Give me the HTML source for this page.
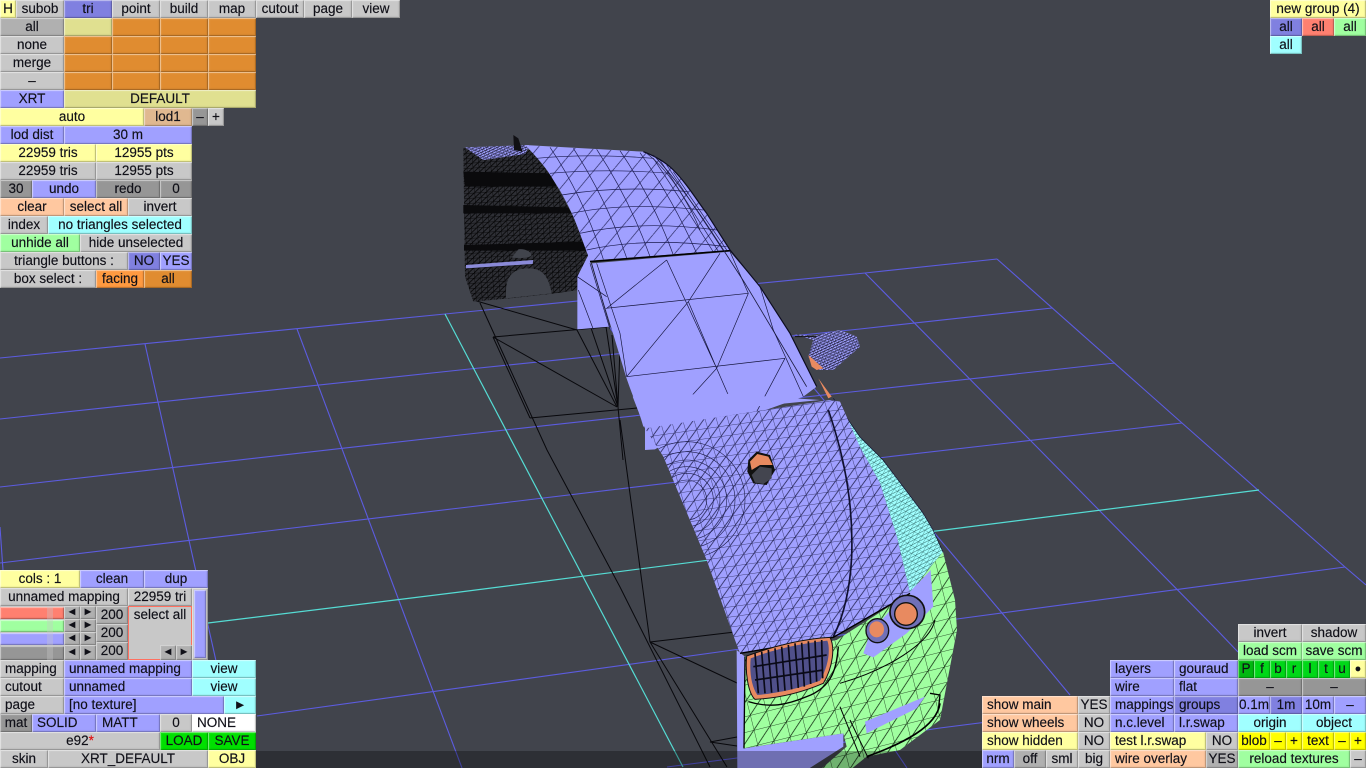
<!DOCTYPE html>
<html><head><meta charset="utf-8"><style>
html,body{margin:0;padding:0;width:1366px;height:768px;overflow:hidden;background:#41444c}
svg{position:absolute;left:0;top:0}
#band{position:absolute;left:0;top:751px;width:1366px;height:17px;background:rgba(0,0,0,.3)}
i{position:absolute;font-style:normal;height:18px;line-height:18px;text-align:center;box-sizing:border-box;font-family:"Liberation Sans",sans-serif;font-size:13.5px;letter-spacing:0;color:#101018;-webkit-text-stroke:.15px #101018;white-space:pre;box-shadow:inset 1px 1px 0 rgba(255,255,255,.4),inset -1px -1px 0 rgba(0,0,0,.2),inset 2px 2px 1px rgba(255,255,255,.08),inset -2px -2px 1px rgba(0,0,0,.05);overflow:hidden}
.g{background:#c8c8c8}.d{background:#969696}.m{background:#b0b0b0}.b{background:#a0a0ff}.k{background:#8080e0}
.y{background:#ffffa0}.p{background:#ffc8a0}.c{background:#a0ffff}.n{background:#a0ffa0}.o{background:#e08c30}
.e{background:#e0e090}.f{background:#ff9a40}.t{background:#e0b890}.r{background:#ff8070}.w{background:#fff}
.v{background:#00e000}.u{background:#ffff00}.q{background:#00d818}
.l{text-align:left;padding-left:5px}
.s{font-size:11px;letter-spacing:0}
</style></head><body>
<svg width="1366" height="768" viewBox="0 0 1366 768" xmlns="http://www.w3.org/2000/svg">
<defs>
<pattern id="dg" width="70" height="55" patternUnits="userSpaceOnUse" patternTransform="rotate(-12)"><path d="M0 55L70 0" stroke="#1c1c50" stroke-width="2" fill="none"/></pattern>
<pattern id="mh" width="33" height="30" patternUnits="userSpaceOnUse" patternTransform="rotate(-8) skewX(8)"><path d="M0 0H33M0 0V30M0 30L33 0" stroke="#1c1c48" stroke-width="2.1" fill="none"/></pattern>
<pattern id="mg" width="50" height="46" patternUnits="userSpaceOnUse" patternTransform="rotate(-14)"><path d="M0 0H50M0 0V46M0 46L50 0" stroke="#0a200a" stroke-width="2.2" fill="none"/></pattern>
<pattern id="mk" width="18" height="15" patternUnits="userSpaceOnUse" patternTransform="rotate(-4)"><path d="M0 0H18M0 0V15M0 15L18 0" stroke="#000" stroke-width="2.2" fill="none"/></pattern>
<pattern id="mc" width="13" height="20" patternUnits="userSpaceOnUse" patternTransform="rotate(30)"><path d="M0 0H13M0 0V20M0 20L13 0" stroke="#10403e" stroke-width="1.4" fill="none"/></pattern>
<pattern id="mm" width="10" height="10" patternUnits="userSpaceOnUse" patternTransform="rotate(20)"><path d="M0 0H10M0 0V10M0 10L10 0" stroke="#15152a" stroke-width="2" fill="none"/></pattern>
<clipPath id="hc"><path d="M75 85L630 0L700 30L860 570L640 710L360 760L345 720L260 480L130 170Z"/></clipPath>
</defs>
<g fill="none" stroke="#5c5ce0" stroke-width="1.1">
<path d="M0 358L445 314L865 273L997 259"/>
<path d="M0 419L460 370L860 329L1052 308"/>
<path d="M0 487L460 435L860 391L1115 363"/>
<path d="M0 563L460 508L878 458L1182 423"/>
<path d="M257 716L733 650L957 619L1345 567"/>
<path d="M667 767L737 758L940 728L1238 690"/>
<path d="M145 344L240 768"/>
<path d="M297 329L410 630L462 768"/>
<path d="M590 298L907 768"/>
<path d="M728 285L942 542L1002 613L1070 695"/>
<path d="M865 273L1031 441L1217 630L1238 652"/>
<path d="M997 259L1182 423L1345 567L1366 585"/>
<path d="M0 527L3 570"/>
</g>
<g fill="none" stroke="#55dcd4" stroke-width="1.2">
<path d="M445 314L683 767"/>
<path d="M208 623L460 592L936 531L1259 490"/>
</g>
<g fill="none" stroke="#08080c" stroke-width="1">
<path d="M480 303L547 450L620 587L710 767M493 337L617 407M493 337L607 327M530 418L637 408M473 300L577 330M577 330L617 407M605 320L618 407M590 325L618 407M612 335L618 407M620 345L618 407M618 407L623 460M620 420L650 642M650 642L735 632M650 642L737 683M650 642L727 767M530 418L493 337M710 742L737 737M710 742L737 746"/>
</g>
<g transform="translate(440 130) scale(.33333)">
<path d="M70 55L270 60L330 130L400 260L445 370L430 440L415 480L345 490L210 505L100 515L75 440Z" fill="#2e2f35"/>
<path d="M70 55L270 60L330 130L400 260L445 370L430 440L415 480L345 490L210 505L100 515L75 440Z" fill="url(#mk)"/>
<path d="M70 125L330 130L350 170H75ZM70 225L385 232L395 250H70ZM72 345L430 335L440 362H72Z" fill="#0a0a0c"/>
<path d="M78 405L280 390L278 402L78 415Z" fill="#8a8ad8"/>
<path d="M235 358C255 355 272 365 275 375C270 385 240 385 215 383Z" fill="#41444c"/>
<path d="M198 505C195 440 215 415 265 415C310 415 325 440 335 490Z" fill="#41444c"/>
<path d="M75 52L270 45L255 72L130 90Z" fill="#a0a0ff"/>
<path d="M75 52L270 45L255 72L130 90Z" fill="url(#mm)"/>
<path d="M220 15L235 25L248 65L222 60Z" fill="#101014"/>
<path d="M412 440L445 375L510 590L412 598Z" fill="#a0a0ff"/>
<path d="M255 45L610 65C650 80 680 100 700 120C740 160 770 210 800 250L870 360L450 392C430 340 415 295 400 260C380 215 360 180 340 150C320 115 290 80 255 45Z" fill="#a0a0ff"/>
<path d="M255 45L610 65C650 80 680 100 700 120C740 160 770 210 800 250L870 360L450 392C430 340 415 295 400 260C380 215 360 180 340 150C320 115 290 80 255 45Z" fill="url(#dg)"/>
<g fill="none" stroke="#1c1c50" stroke-width="2">
<path d="M330 52Q430 200 490 388M400 55Q500 210 560 384M470 58Q570 210 630 380M540 62Q640 210 700 375M600 68Q700 210 770 370M640 85Q730 220 820 366M680 105Q770 240 850 362M660 90Q750 230 835 364M700 125Q785 250 860 360"/>
<path d="M290 85Q450 70 640 85M330 130Q500 115 690 130M365 195Q540 165 745 185M395 250Q560 215 790 240M420 310Q600 270 830 300M440 360Q620 320 860 350"/>
</g>
<path d="M455 400L870 365L960 470L1050 610L1130 770L1090 800L950 850L610 890C590 820 570 780 555 730C540 680 525 630 510 580Z" fill="#a0a0ff"/>
<path d="M450 395L870 362" stroke="#000" stroke-width="4.5" fill="none"/>
<path d="M610 65C650 80 680 100 700 120C740 160 770 210 800 250L870 360L960 470L1050 610L1130 770" stroke="#0c0c20" stroke-width="3.5" fill="none"/>
<path d="M640 75C740 180 830 330 915 460L1100 770" stroke="#1c1c40" stroke-width="2.5" fill="none"/>
<path d="M620 70C700 130 760 250 780 300" stroke="#1c1c40" stroke-width="2" fill="none"/>
<g stroke="#14143a" stroke-width="2" fill="none">
<path d="M497 535L925 490M560 740L1035 685M680 390L830 715L880 830M840 370L745 515L560 740M500 535L680 390M925 490L830 715L680 880M745 515L830 715M1035 685L950 845M455 400L510 590M470 400L540 610L560 740M925 490L870 365M960 470L1000 600L1090 800"/>
<path d="M412 440L500 500M415 480L460 598M450 400L510 598"/>
</g>
<path d="M1060 612L1120 618L1200 600L1250 620L1260 650L1180 720L1130 720L1105 680L1120 630Z" fill="#a0a0ff"/>
<path d="M1060 612L1120 618L1200 600L1250 620L1260 650L1180 720L1130 720L1105 680L1120 630Z" fill="url(#mm)"/>
<path d="M1105 675L1150 715L1130 720L1115 710ZM1135 745L1175 800L1165 805Z" fill="#e88a60"/>
<path d="M1065 620H1130" stroke="#111" stroke-width="3"/>
</g>
<g transform="translate(620 400) scale(.33333)">
<path d="M38 -10L75 85L75 150L105 148L300 30L600 0L300 -20Z" fill="#a0a0ff"/>
<path d="M640 -5L720 111L789 180L909 339L939 390L969 456L930 501L870 579L831 411L780 249L720 141Z" fill="#a0ffff"/>
<path d="M640 -5L720 111L789 180L909 339L939 390L969 456L930 501L870 579L831 411L780 249L720 141Z" fill="url(#mc)"/>
<path d="M640 -5L720 111L789 180L909 339L939 390L969 456" stroke="#101030" stroke-width="2" fill="none"/>
<path d="M75 85L630 0L660 5L720 141L780 249L831 411L870 579L640 710L360 760L345 720L260 480L130 170Z" fill="#a0a0ff"/>
<path d="M75 85L630 0L660 5L720 141L780 249L831 411L870 579L640 710L360 760L345 720L260 480L130 170Z" fill="url(#mh)"/>
<g clip-path="url(#hc)" fill="none" stroke="#1c1c48" stroke-width="1.8"><circle cx="200" cy="300" r="60"/><circle cx="200" cy="300" r="80"/><circle cx="200" cy="300" r="100"/><circle cx="200" cy="300" r="120"/><circle cx="200" cy="300" r="145"/><circle cx="200" cy="300" r="175"/></g>
<path d="M625 30C680 190 700 330 695 470C690 570 670 650 640 710" stroke="#101030" stroke-width="5" fill="none"/>
<path d="M350 750L375 770L372 1045L670 1000L670 1040L560 1110H352Z" fill="#a0a0ff"/>
<path d="M969 456L1005 600L1011 690L960 960L840 1050L740 1070L690 1110H600L680 1040L670 1000L370 1045L375 770L650 720L870 580L940 490Z" fill="#a0ffa0"/>
<path d="M969 456L1005 600L1011 690L960 960L840 1050L740 1070L690 1110H600L680 1040L670 1000L370 1045L375 770L650 720L870 580L940 490Z" fill="url(#mg)"/>
<path d="M932 510L940 620L860 700L760 772L730 760L750 700L820 620L870 575Z" fill="#a0a0ff"/>
<g stroke="#000" fill="none">
<path d="M655 740C650 800 640 860 560 890C500 915 450 925 385 905" stroke-width="4"/>
<path d="M945 660C930 730 800 810 660 850" stroke-width="3"/>
<path d="M960 910C950 980 850 1030 740 1070" stroke-width="5"/>
<path d="M375 770L372 1045" stroke-width="4"/>
<path d="M660 920L720 1070M690 960L745 1075" stroke-width="3"/>
<path d="M360 760L640 712L870 580" stroke-width="4"/>
<path d="M930 880L960 885L955 930" stroke-width="4"/>
</g>
<path d="M735 965L915 890L890 925L740 1000Z" fill="#a0a0ff"/>
<path d="M380 768C470 735 560 715 630 712C645 740 640 800 610 850C540 880 470 895 405 898C385 880 375 820 380 768Z" fill="#e88a60" stroke="#111" stroke-width="3"/>
<path d="M392 775C470 745 550 730 622 722C632 750 625 800 600 842C530 868 470 880 412 885C395 860 388 820 392 775Z" fill="#50508a"/>
<path d="M405 760L415 880M425 755L435 880M445 750L455 878M465 745L475 875M485 740L495 872M505 735L515 868M525 730L535 864M545 728L553 860M565 724L572 852M585 722L590 845M605 720L608 835M400 800L620 765M405 840L610 810" stroke="#0a0a18" stroke-width="5" fill="none"/>
<ellipse cx="862" cy="636" rx="52" ry="50" fill="#7070b8" stroke="#111" stroke-width="5"/>
<ellipse cx="858" cy="642" rx="34" ry="34" fill="#e88a60" stroke="#111" stroke-width="4"/>
<ellipse cx="772" cy="692" rx="34" ry="36" fill="#7070b8" stroke="#111" stroke-width="4"/>
<ellipse cx="770" cy="688" rx="22" ry="24" fill="#e88a60"/>
<path d="M385 180L410 155L450 165L465 210L440 255L400 250L382 215Z" fill="#111"/>
<path d="M390 185L412 162L445 170L458 195L420 195L395 210Z" fill="#e88a60"/>
<path d="M395 225L420 200L455 205L455 235L430 252L405 248Z" fill="#43454f"/>
</g>
</svg>
<div id="band"></div>

<i class="y" style="left:0;top:0;width:16px">H</i><i class="g" style="left:16px;top:0;width:48px">subob</i><i class="k" style="left:64px;top:0;width:48px">tri</i><i class="g" style="left:112px;top:0;width:48px">point</i><i class="g" style="left:160px;top:0;width:48px">build</i><i class="g" style="left:208px;top:0;width:48px">map</i><i class="g" style="left:256px;top:0;width:48px">cutout</i><i class="g" style="left:304px;top:0;width:48px">page</i><i class="g" style="left:352px;top:0;width:48px">view</i>

<i class="m" style="left:0;top:18px;width:64px">all</i><i class="e" style="left:64px;top:18px;width:48px"></i><i class="o" style="left:112px;top:18px;width:48px"></i><i class="o" style="left:160px;top:18px;width:48px"></i><i class="o" style="left:208px;top:18px;width:48px"></i>
<i class="g" style="left:0;top:36px;width:64px">none</i><i class="o" style="left:64px;top:36px;width:48px"></i><i class="o" style="left:112px;top:36px;width:48px"></i><i class="o" style="left:160px;top:36px;width:48px"></i><i class="o" style="left:208px;top:36px;width:48px"></i>
<i class="g" style="left:0;top:54px;width:64px">merge</i><i class="o" style="left:64px;top:54px;width:48px"></i><i class="o" style="left:112px;top:54px;width:48px"></i><i class="o" style="left:160px;top:54px;width:48px"></i><i class="o" style="left:208px;top:54px;width:48px"></i>
<i class="g" style="left:0;top:72px;width:64px">–</i><i class="o" style="left:64px;top:72px;width:48px"></i><i class="o" style="left:112px;top:72px;width:48px"></i><i class="o" style="left:160px;top:72px;width:48px"></i><i class="o" style="left:208px;top:72px;width:48px"></i>
<i class="b" style="left:0;top:90px;width:64px">XRT</i><i class="e" style="left:64px;top:90px;width:192px">DEFAULT</i>
<i class="y" style="left:0;top:108px;width:144px">auto</i><i class="t" style="left:144px;top:108px;width:48px">lod1</i><i class="d" style="left:192px;top:108px;width:16px">–</i><i class="g" style="left:208px;top:108px;width:16px">+</i>
<i class="b" style="left:0;top:126px;width:64px">lod dist</i><i class="b" style="left:64px;top:126px;width:128px">30 m</i>
<i class="y" style="left:0;top:144px;width:96px">22959 tris</i><i class="y" style="left:96px;top:144px;width:96px">12955 pts</i>
<i class="g" style="left:0;top:162px;width:96px">22959 tris</i><i class="g" style="left:96px;top:162px;width:96px">12955 pts</i>
<i class="d" style="left:0;top:180px;width:32px">30</i><i class="b" style="left:32px;top:180px;width:64px">undo</i><i class="d" style="left:96px;top:180px;width:64px">redo</i><i class="d" style="left:160px;top:180px;width:32px">0</i>
<i class="p" style="left:0;top:198px;width:64px">clear</i><i class="p" style="left:64px;top:198px;width:64px">select all</i><i class="g" style="left:128px;top:198px;width:64px">invert</i>
<i class="g" style="left:0;top:216px;width:48px">index</i><i class="c" style="left:48px;top:216px;width:144px">no triangles selected</i>
<i class="n" style="left:0;top:234px;width:80px">unhide all</i><i class="g" style="left:80px;top:234px;width:112px">hide unselected</i>
<i class="g" style="left:0;top:252px;width:128px">triangle buttons :</i><i class="k" style="left:128px;top:252px;width:32px">NO</i><i class="b" style="left:160px;top:252px;width:32px">YES</i>
<i class="g" style="left:0;top:270px;width:96px">box select :</i><i class="f" style="left:96px;top:270px;width:48px">facing</i><i class="o" style="left:144px;top:270px;width:48px">all</i>

<i class="y" style="left:1270px;top:0;width:96px">new group (4)</i>
<i class="k" style="left:1270px;top:18px;width:32px">all</i><i class="r" style="left:1302px;top:18px;width:32px">all</i><i class="n" style="left:1334px;top:18px;width:32px">all</i>
<i class="c" style="left:1270px;top:36px;width:32px">all</i>

<i class="y" style="left:0;top:570px;width:80px">cols : 1</i><i class="b" style="left:80px;top:570px;width:64px">clean</i><i class="b" style="left:144px;top:570px;width:64px">dup</i>
<i class="g" style="left:0;top:588px;width:128px">unnamed mapping</i><i class="g" style="left:128px;top:588px;width:64px">22959 tri</i>
<i class="g" style="left:192px;top:588px;width:16px;height:72px"></i>
<i class="b" style="left:194px;top:590px;width:12px;height:68px"></i>
<i class="g" style="left:0;top:606px;width:64px;height:54px;box-shadow:none"></i>
<i class="r" style="left:0;top:607px;width:64px;height:12px"></i><i class="g" style="left:47px;top:607px;width:6px;height:12px;background:rgba(200,200,200,.35);box-shadow:none"></i>
<i class="n" style="left:0;top:620px;width:64px;height:12px"></i><i class="g" style="left:47px;top:620px;width:6px;height:12px;background:rgba(200,200,200,.35);box-shadow:none"></i>
<i class="b" style="left:0;top:633px;width:64px;height:12px"></i><i class="g" style="left:47px;top:633px;width:6px;height:12px;background:rgba(200,200,200,.35);box-shadow:none"></i>
<i class="d" style="left:0;top:646px;width:64px;height:14px"></i><i class="g" style="left:47px;top:646px;width:6px;height:14px;background:rgba(200,200,200,.35);box-shadow:none"></i>
<i class="m s" style="left:64px;top:606px;width:16px;height:13px;line-height:13px">◄</i><i class="m s" style="left:80px;top:606px;width:16px;height:13px;line-height:13px">►</i>
<i class="m s" style="left:64px;top:619px;width:16px;height:13px;line-height:13px">◄</i><i class="m s" style="left:80px;top:619px;width:16px;height:13px;line-height:13px">►</i>
<i class="m s" style="left:64px;top:632px;width:16px;height:13px;line-height:13px">◄</i><i class="m s" style="left:80px;top:632px;width:16px;height:13px;line-height:13px">►</i>
<i class="m s" style="left:64px;top:645px;width:16px;height:15px;line-height:15px">◄</i><i class="m s" style="left:80px;top:645px;width:16px;height:15px;line-height:15px">►</i>
<i class="m" style="left:96px;top:606px;width:32px">200</i><i class="m" style="left:96px;top:624px;width:32px">200</i><i class="m" style="left:96px;top:642px;width:32px">200</i>
<i class="g" style="left:128px;top:606px;width:64px;height:54px;border:1px solid #ff7060;line-height:16px;box-shadow:none">select all</i>
<i class="m s" style="left:160px;top:645px;width:16px;height:15px;line-height:15px">◄</i><i class="m s" style="left:176px;top:645px;width:16px;height:15px;line-height:15px">►</i>

<i class="g l" style="left:0;top:660px;width:64px">mapping</i><i class="b l" style="left:64px;top:660px;width:128px">unnamed mapping</i><i class="c" style="left:192px;top:660px;width:64px">view</i>
<i class="g l" style="left:0;top:678px;width:64px">cutout</i><i class="b l" style="left:64px;top:678px;width:128px">unnamed</i><i class="c" style="left:192px;top:678px;width:64px">view</i>
<i class="g l" style="left:0;top:696px;width:64px">page</i><i class="b l" style="left:64px;top:696px;width:160px">[no texture]</i><i class="c s" style="left:224px;top:696px;width:32px;font-size:13px">►</i>
<i class="d" style="left:0;top:714px;width:32px">mat</i><i class="b l" style="left:32px;top:714px;width:64px">SOLID</i><i class="b l" style="left:96px;top:714px;width:64px;padding-left:6px">MATT</i><i class="g" style="left:160px;top:714px;width:32px">0</i><i class="w l" style="left:192px;top:714px;width:64px">NONE</i>
<i class="g" style="left:0;top:732px;width:160px">e92<span style="color:#e01010;-webkit-text-stroke:.15px #e01010">*</span></i><i class="v" style="left:160px;top:732px;width:48px">LOAD</i><i class="v" style="left:208px;top:732px;width:48px">SAVE</i>
<i class="g" style="left:0;top:750px;width:48px">skin</i><i class="g" style="left:48px;top:750px;width:160px">XRT_DEFAULT</i><i class="y" style="left:208px;top:750px;width:48px">OBJ</i>

<i class="g" style="left:1238px;top:624px;width:64px">invert</i><i class="g" style="left:1302px;top:624px;width:64px">shadow</i>
<i class="n" style="left:1238px;top:642px;width:64px">load scm</i><i class="n" style="left:1302px;top:642px;width:64px">save scm</i>
<i class="b l" style="left:1110px;top:660px;width:64px">layers</i><i class="b l" style="left:1174px;top:660px;width:64px">gouraud</i>
<i class="q" style="left:1238px;top:660px;width:16px;background:#00b810">P</i><i class="q" style="left:1254px;top:660px;width:16px">f</i><i class="q" style="left:1270px;top:660px;width:16px">b</i><i class="q" style="left:1286px;top:660px;width:16px">r</i><i class="q" style="left:1302px;top:660px;width:16px">l</i><i class="q" style="left:1318px;top:660px;width:16px">t</i><i class="q" style="left:1334px;top:660px;width:16px">u</i><i class="y" style="left:1350px;top:660px;width:16px;font-size:11px">●</i>
<i class="b l" style="left:1110px;top:678px;width:64px">wire</i><i class="b l" style="left:1174px;top:678px;width:64px">flat</i><i class="d" style="left:1238px;top:678px;width:64px">–</i><i class="d" style="left:1302px;top:678px;width:64px">–</i>
<i class="p l" style="left:982px;top:696px;width:96px">show main</i><i class="g" style="left:1078px;top:696px;width:32px">YES</i><i class="b l" style="left:1110px;top:696px;width:64px">mappings</i><i class="k l" style="left:1174px;top:696px;width:64px">groups</i><i class="b" style="left:1238px;top:696px;width:32px">0.1m</i><i class="k" style="left:1270px;top:696px;width:32px">1m</i><i class="b" style="left:1302px;top:696px;width:32px">10m</i><i class="b" style="left:1334px;top:696px;width:32px">–</i>
<i class="p l" style="left:982px;top:714px;width:96px">show wheels</i><i class="g" style="left:1078px;top:714px;width:32px">NO</i><i class="b l" style="left:1110px;top:714px;width:64px">n.c.level</i><i class="b l" style="left:1174px;top:714px;width:64px">l.r.swap</i><i class="c" style="left:1238px;top:714px;width:64px">origin</i><i class="c" style="left:1302px;top:714px;width:64px">object</i>
<i class="y l" style="left:982px;top:732px;width:96px">show hidden</i><i class="g" style="left:1078px;top:732px;width:32px">NO</i><i class="y l" style="left:1110px;top:732px;width:96px">test l.r.swap</i><i class="g" style="left:1206px;top:732px;width:32px">NO</i><i class="u" style="left:1238px;top:732px;width:32px">blob</i><i class="u" style="left:1270px;top:732px;width:16px">–</i><i class="u" style="left:1286px;top:732px;width:16px">+</i><i class="u" style="left:1302px;top:732px;width:32px">text</i><i class="u" style="left:1334px;top:732px;width:16px">–</i><i class="u" style="left:1350px;top:732px;width:16px">+</i>
<i class="b" style="left:982px;top:750px;width:32px">nrm</i><i class="m" style="left:1014px;top:750px;width:32px">off</i><i class="g" style="left:1046px;top:750px;width:32px">sml</i><i class="g" style="left:1078px;top:750px;width:32px">big</i><i class="p l" style="left:1110px;top:750px;width:96px">wire overlay</i><i class="m" style="left:1206px;top:750px;width:32px">YES</i><i class="n" style="left:1238px;top:750px;width:112px">reload textures</i><i class="g" style="left:1350px;top:750px;width:16px">–</i>
</body></html>
